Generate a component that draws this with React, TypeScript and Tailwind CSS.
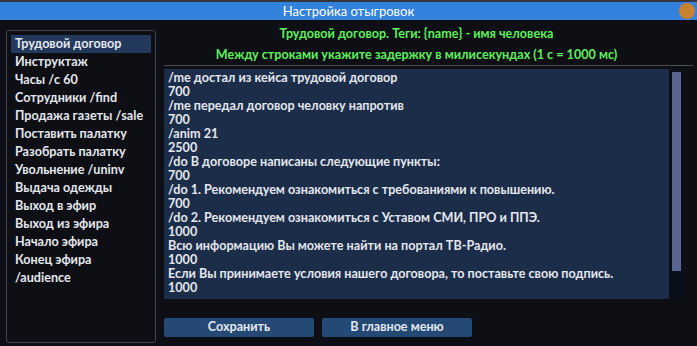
import React from "react";

const items = [
  "Трудовой договор",
  "Инструктаж",
  "Часы /c 60",
  "Сотрудники /find",
  "Продажа газеты /sale",
  "Поставить палатку",
  "Разобрать палатку",
  "Увольнение /uninv",
  "Выдача одежды",
  "Выход в эфир",
  "Выход из эфира",
  "Начало эфира",
  "Конец эфира",
  "/audience",
];

const lines = [
  "/me достал из кейса трудовой договор",
  "700",
  "/me передал договор человку напротив",
  "700",
  "/anim 21",
  "2500",
  "/do В договоре написаны следующие пункты:",
  "700",
  "/do 1. Рекомендуем ознакомиться с требованиями к повышению.",
  "700",
  "/do 2. Рекомендуем ознакомиться с Уставом СМИ, ПРО и ППЭ.",
  "1000",
  "Всю информацию Вы можете найти на портал ТВ-Радио.",
  "1000",
  "Если Вы принимаете условия нашего договора, то поставьте свою подпись.",
  "1000",
];

export default function App() {
  return (
    <div className="w-[697px] h-[346px] overflow-hidden bg-[#0d0f14] flex flex-col text-[12.6px] font-bold text-[#e4e7ee] font-['Lato',sans-serif]">
      <div className="h-[2px] bg-[#34363b]" />
      <div className="h-[18px] bg-[#3282de] relative flex items-center justify-center">
        <span className="text-white leading-none font-normal text-[13px]">Настройка отыгровок</span>
        <div className="absolute right-[2px] top-[1px] w-[16px] h-[16px] rounded-full bg-[#c8822e]" />
      </div>
      <div className="flex flex-1">
        <div className="ml-[6px] mt-[10px] w-[150px] h-[313px] border border-[#42454d] rounded-[3px] p-[4px]">
          {items.map((t, i) => (
            <div
              key={i}
              className={`h-[18px] pl-[4px] flex items-center whitespace-nowrap leading-none ${
                i === 0 ? "bg-[#23395b]" : ""
              }`}
            >
              {t}
            </div>
          ))}
        </div>
        <div className="ml-[8px] w-[529px] flex flex-col">
          <div className="h-[45px] flex flex-col items-center pt-[5px] text-[#5ef05e] leading-none pr-[24px]">
            <div className="h-[18px] flex items-center">Трудовой договор. Теги: {"{name}"} - имя человека</div>
            <div className="h-[3px]" />
            <div className="h-[18px] flex items-center">Между строками укажите задержку в милисекундах (1 с = 1000 мс)</div>
          </div>
          <div className="h-[1px] bg-[#4a4c52] w-[529px]" />
          <div className="mt-[3px] flex h-[230px]">
            <div className="w-[505px] h-[230px] bg-[#1c2d4a] pl-[4px] pt-[2px] overflow-hidden">
              {lines.map((l, i) => (
                <div key={i} className="h-[14px] flex items-center whitespace-nowrap leading-none">
                  {l}
                </div>
              ))}
            </div>
            <div className="w-[15px] h-[230px] bg-[#0a0f1c] pt-[3px] pl-[3px]">
              <div className="w-[9px] h-[199px] bg-[#5a6690]" />
            </div>
          </div>
          <div className="mt-[19px] flex gap-[8px]">
            <div className="w-[150px] h-[19px] bg-[#244975] rounded-[2px] flex items-center justify-center leading-none">
              Сохранить
            </div>
            <div className="w-[150px] h-[19px] bg-[#244975] rounded-[2px] flex items-center justify-center leading-none">
              В главное меню
            </div>
          </div>
        </div>
      </div>
    </div>
  );
}
